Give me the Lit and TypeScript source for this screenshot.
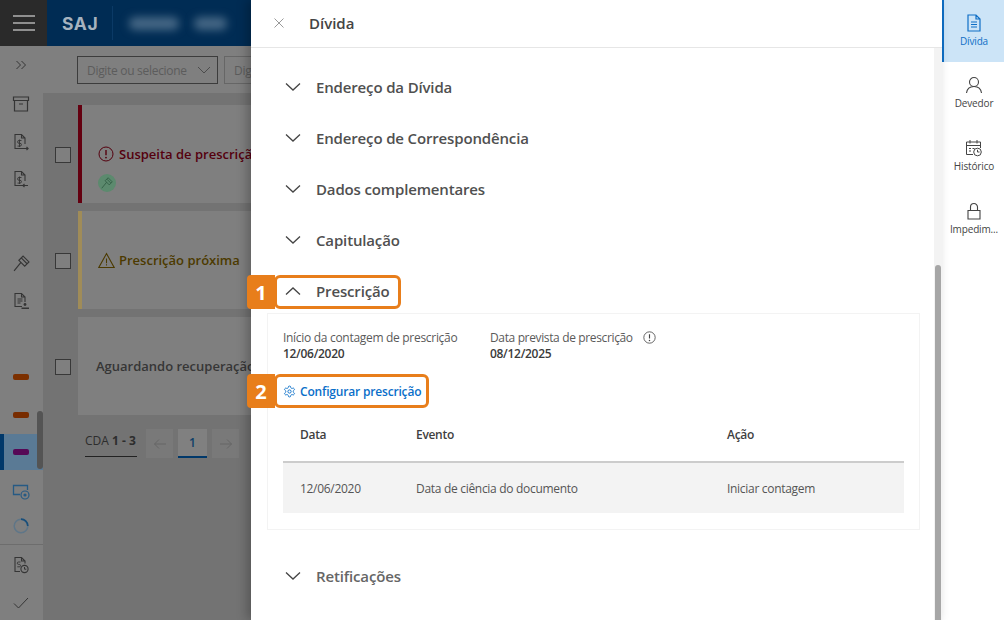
import { LitElement, html, css, svg } from "lit";
import { customElement } from "lit/decorators.js";

const ic = (size: number, box: number, body: unknown, cls = "") =>
  html`<svg class=${cls} width=${size} height=${size} viewBox="0 0 ${box} ${box}" fill="none" stroke="currentColor" stroke-width="1">${body}</svg>`;

const chevDown = ic(16, 16, svg`<path d="M1 4.5 8 11l7-6.5" stroke-width="1.3"/>`);
const chevUp = ic(16, 16, svg`<path d="M1 11.5 8 5l7 6.5" stroke-width="1.3"/>`);
const gear = ic(13, 24, svg`<path stroke-width="1.7" d="M12.22 2h-.44a2 2 0 0 0-2 2v.18a2 2 0 0 1-1 1.73l-.43.25a2 2 0 0 1-2 0l-.15-.08a2 2 0 0 0-2.73.73l-.22.38a2 2 0 0 0 .73 2.73l.15.1a2 2 0 0 1 1 1.72v.51a2 2 0 0 1-1 1.74l-.15.09a2 2 0 0 0-.73 2.73l.22.38a2 2 0 0 0 2.73.73l.15-.08a2 2 0 0 1 2 0l.43.25a2 2 0 0 1 1 1.73V20a2 2 0 0 0 2 2h.44a2 2 0 0 0 2-2v-.18a2 2 0 0 1 1-1.73l.43-.25a2 2 0 0 1 2 0l.15.08a2 2 0 0 0 2.73-.73l.22-.39a2 2 0 0 0-.73-2.73l-.15-.08a2 2 0 0 1-1-1.74v-.5a2 2 0 0 1 1-1.74l.15-.09a2 2 0 0 0 .73-2.73l-.22-.38a2 2 0 0 0-2.73-.73l-.15.08a2 2 0 0 1-2 0l-.43-.25a2 2 0 0 1-1-1.73V4a2 2 0 0 0-2-2z"/><circle cx="12" cy="12" r="3" stroke-width="1.7"/>`);
const alertCircle = (s: number) => ic(s, 16, svg`<circle cx="8" cy="8" r="7"/><path d="M8 4v5.2" stroke-width="1.4"/><circle cx="8" cy="11.6" r=".9" fill="currentColor" stroke="none"/>`);
const warning = ic(17, 16, svg`<path d="M8 1.5 15.2 14.5H.8z"/><path d="M8 6v4.5M8 11.5v1.3"/>`);
const gavel = (s: number) => ic(s, 16, svg`<path d="M9.500 1 15 6.500l-4 4L5.500 5zM7.500 7 1 15M8 3l5 5" stroke-width="1.100"/>`);
const docDollar = (arrow: string) => ic(18, 18, svg`<path d="M11 15.5H3V1.5h6.5L13 5v6M9.5 1.5V5H13" stroke-width="1.1"/><path d="M9.5 7.5H7a1.3 1.3 0 0 0 0 2.8h1a1.3 1.3 0 0 1 0 2.8H5.5M7.5 6.5v7.5" stroke-width=".9"/><path d=${arrow} stroke-width="1.1"/>`);

const railIcons = {
  expand: ic(14, 14, svg`<path d="M2.5 3 6.5 7l-4 4M7.5 3l4 4-4 4"/>`),
  archive: ic(18, 18, svg`<path d="M1.5 2h15v3.5h-15zM2.5 5.5V16h13V5.5M7 9h4" stroke-width="1.2"/>`),
  docOut: docDollar("M11 15.5h5M14.5 14l1.6 1.5-1.6 1.5"),
  docIn: docDollar("M16 15.5h-5M12.5 14l-1.6 1.5 1.6 1.5"),
  gavel: gavel(17),
  docPerson: ic(18, 18, svg`<path d="M10 14.5H3v-13h6.5L13 5v5M9.5 1.5V5H13M5.5 7h5M5.5 9h5M5.5 11h3" stroke-width="1.1"/><path d="M9.5 15.5h7.5v1.5H9.5z" fill="currentColor" stroke="none"/><circle cx="13" cy="12.5" r="1.4" fill="currentColor" stroke="none"/>`),
  screen: ic(18, 18, svg`<path d="M8 12.5H1.5v-9h14V8" stroke="#265a84" stroke-width="1.3"/><circle cx="13" cy="13" r="4" stroke="#265a84" stroke-width="1.2"/><circle cx="13" cy="13" r="1.6" fill="#265a84" stroke="none"/>`),
  spinner: ic(16, 16, svg`<circle cx="8" cy="8" r="6.8" stroke="#5f7688" stroke-width="1.5"/><path d="M8 1.2A6.8 6.8 0 0 1 14.8 8" stroke="#184e7a" stroke-width="1.7"/>`),
  docClock: ic(18, 18, svg`<path d="M8 15.5H3V1.5h6.5L13 5v2.5M9.5 1.5V5H13" stroke-width="1.1"/><path d="M8.5 6H6.5a1.1 1.1 0 0 0 0 2.4h.8a1.1 1.1 0 0 1 0 2.4H5.3" stroke-width=".9"/><circle cx="12.5" cy="13" r="3.6" stroke-width="1.1"/><path d="M12.5 11v2.2h1.8"/>`),
  check: ic(16, 16, svg`<path d="M1 8.5 5.5 13 15 3"/>`),
};

@customElement("app-root")
export class AppRoot extends LitElement {
  static styles = css`
    :host { display: block; width: 1004px; height: 620px; overflow: hidden; font-family: "Open Sans", "Noto Sans", sans-serif; position: relative; }
    * { box-sizing: border-box; }
    .page { display: grid; grid-template-columns: 251px 691px 62px; height: 620px; }

    .back { display: grid; grid-template-rows: 46px 1fr; background: #737373; overflow: hidden; min-width: 0; }
    .topbar { display: flex; background: #002c54; align-items: center; }
    .burger { width: 47px; height: 46px; background: #2a2a2a; display: flex; flex-direction: column; gap: 5px; align-items: center; justify-content: center; }
    .burger i { display: block; width: 22px; height: 2px; background: #8f8f8f; }
    .saj { color: #a6b3bf; font-weight: 700; font-size: 17.5px; margin-left: 15px; letter-spacing: .6px; font-family: "Inter", sans-serif; }
    .vline { width: 1px; height: 34px; background: #0b3a66; margin-left: 14px; }
    .blur { height: 13px; background: #456785; border-radius: 6px; filter: blur(4px); }
    .blur.a { width: 50px; margin-left: 16px; }
    .blur.b { width: 33px; margin-left: 15px; }

    .under { display: grid; grid-template-columns: 43px 1fr; min-height: 0; }
    .rail { background: #7f7f7f; color: #353535; display: flex; flex-direction: column; position: relative; }
    .ri { height: 37.5px; display: flex; align-items: center; justify-content: center; flex: none; padding-right: 1px; }
    .m2 { margin-top: 2px; } .m46 { margin-top: 46.5px; } .m39 { margin-top: 39px; } .m1 { margin-top: 1px; }
    .ri.active { background: #5a7a95; border-left: 4px solid #00386a; height: 36px; margin-top: .5px; margin-bottom: 1px; padding-right: 5px; }
    .ri.short { height: 32px; }
    .rdiv { height: 1px; background: #6d6d6d; margin: 2px 0; flex: none; }
    .bar { width: 16px; height: 6px; border-radius: 2px; }
    .rthumb { position: absolute; left: 37px; top: 365px; width: 6px; height: 58px; background: #545454; border-radius: 3px; }

    .main { display: flex; flex-direction: column; min-width: 0; }
    .filters { height: 47px; background: #7f7f7f; display: flex; gap: 6px; padding: 10px 0 0 34px; overflow: hidden; flex: none; }
    .sel { height: 28px; border: 1px solid #3c3c3c; color: #5c5c5c; font-size: 12px; padding: 0 6px 0 9px; display: flex; align-items: center; justify-content: space-between; flex: none; white-space: nowrap; letter-spacing: -.3px; }
    .sel.one { width: 141px; }
    .sel.two { width: 60px; border-color: #666; justify-content: flex-start; }
    .sel svg { color: #4c4c4c; }
    .rows { display: flex; flex-direction: column; gap: 8px; padding: 12px 0 0 12px; }
    .row { display: flex; align-items: center; gap: 7px; height: 98px; }
    .cb { width: 16px; height: 16px; border: 1px solid #383838; background: #7f7f7f; flex: none; margin-top: 2px; }
    .card { width: 260px; height: 98px; background: #7f7f7f; flex: none; display: flex; flex-direction: column; justify-content: center; padding-left: 16px; font-size: 13px; font-weight: 600; white-space: nowrap; border-left: 4px solid transparent; position: relative; }
    .card.red { border-left-color: #640010; color: #55000e; }
    .card.yellow { border-left-color: #a08c58; color: #4c3a00; }
    .card.plain { color: #363636; padding-left: 18px; border-left: 0; }
    .cline { display: flex; align-items: center; gap: 5px; }
    .card.yellow .cline { gap: 4px; }
    .badge { position: absolute; left: 16px; top: 69px; width: 18px; height: 18px; border-radius: 50%; background: #5c8a6e; color: #2f5a41; display: flex; align-items: center; justify-content: center; }
    .pager { display: flex; align-items: flex-start; margin: 15px 0 0 42px; }
    .cda { width: 52px; height: 27px; border-bottom: 1px solid #222; font-size: 12px; color: #2d2d2d; white-space: nowrap; padding-top: 2px; }
    .cda b { font-weight: 700; }
    .pg { height: 29px; width: 27px; display: flex; align-items: center; justify-content: center; background: #797979; color: #666; flex: none; margin-top: -1px; }
    .pg.prev { margin-left: 9px; }
    .pg.cur { width: 29px; margin: -1px 5px 0 5px; background: #808080; color: #0e3e68; font-size: 12px; font-weight: 600; border-bottom: 2px solid #00386a; }

    .drawer { background: #fff; position: relative; box-shadow: -4px 0 10px rgba(0,0,0,.25); display: flex; flex-direction: column; min-width: 0; }
    .dh { height: 48px; border-bottom: 1px solid #e6e6e6; display: flex; align-items: center; flex: none; padding: 0 0 2px 23px; color: #444; font-size: 15px; font-weight: 600; }
    .close { color: #9a9a9a; width: 35px; display: flex; }
    .dbody { flex: 1; display: flex; min-height: 0; }
    .content { flex: 1; padding: 13px 0 0 16px; min-width: 0; }
    .track { width: 8px; background: #f3f3f3; display: flex; flex-direction: column; justify-content: flex-end; padding-left: 1px; }
    .thumb { width: 6px; height: 355px; background: #a6a6a6; border-radius: 3px 3px 0 0; }
    .ah { height: 51px; display: flex; align-items: center; padding-left: 18px; gap: 15px; font-size: 15px; font-weight: 600; color: #505050; letter-spacing: -.15px; }
    .ah svg { color: #444; }
    .ah.open { height: 48px; padding-top: 4px; }
    .panel { width: 653px; height: 217px; border: 1px solid #f3f3f3; padding: 16px 15px 0; margin-bottom: 20px; }
    .fields { display: flex; }
    .field { font-size: 12px; line-height: 15px; color: #5a5a5a; letter-spacing: -.3px; }
    .field.f1 { width: 207px; }
    .field.f2 { letter-spacing: -.36px; }
    .field b { display: block; font-weight: 600; color: #3a3a3a; letter-spacing: -.3px; margin-top: 1px; }
    .fhead { display: flex; align-items: center; gap: 10px; }
    .fhead svg { color: #444; }
    .cfg { display: flex; align-items: center; gap: 4px; color: #0a6fc9; font-size: 12px; font-weight: 600; height: 20px; margin-top: 20px; letter-spacing: -.18px; }
    .table { margin-top: 6px; width: 621px; font-size: 12px; letter-spacing: -.3px; }
    .tr { display: grid; grid-template-columns: 116px 311px 1fr; padding-left: 17px; align-items: center; }
    .tr.head { height: 56px; border-bottom: 2px solid #ccc; color: #3f3f3f; font-weight: 600; padding-top: 1px; }
    .tr.body { height: 50px; background: #f3f3f3; color: #555; }
    .muted { color: #666; }

    .ann { position: absolute; display: flex; height: 34px; }
    .ann .num { width: 28px; background: #e87e1b; color: #fff; font-weight: 700; font-size: 20px; display: flex; align-items: center; justify-content: center; border-radius: 4px 0 0 4px; }
    .ann .box { border: 3px solid #e87e1b; border-radius: 6px; margin-left: -1px; }
    .ann.a1 { left: -4px; top: 275px; }
    .ann.a1 .box { width: 127px; }
    .ann.a2 { left: -4px; top: 374px; }
    .ann.a2 .box { width: 155px; }

    .tabs { background: #fff; display: flex; flex-direction: column; }
    .tab { height: 63px; display: flex; flex-direction: column; align-items: center; justify-content: flex-start; padding-top: 14px; font-size: 10px; color: #444; gap: 3px; border-left: 2px solid transparent; letter-spacing: -.15px; white-space: nowrap; flex: none; }
    .tab.on { background: #cce4f7; border-left-color: #0f6fc6; color: #0f6fc6; height: 62px; padding-top: 14px; }
    .tab svg { display: block; }
    .tab .t { line-height: 12px; }
  `;

  private head(title: string, cls = "") {
    return html`<div class="ah ${cls}">${chevDown}<span>${title}</span></div>`;
  }

  render() {
    const r = railIcons;
    return html`<div class="page">
      <section class="back">
        <div class="topbar">
          <div class="burger"><i></i><i></i><i></i></div>
          <span class="saj">SAJ</span><div class="vline"></div>
          <div class="blur a"></div><div class="blur b"></div>
        </div>
        <div class="under">
          <nav class="rail">
            <div class="ri">${r.expand}</div>
            <div class="ri m2">${r.archive}</div>
            <div class="ri">${r.docOut}</div>
            <div class="ri">${r.docIn}</div>
            <div class="ri m46">${r.gavel}</div>
            <div class="ri">${r.docPerson}</div>
            <div class="ri m39"><div class="bar" style="background:#7c3000"></div></div>
            <div class="ri"><div class="bar" style="background:#782c00"></div></div>
            <div class="ri active"><div class="bar" style="background:#560856"></div></div>
            <div class="ri m1">${r.screen}</div>
            <div class="ri short">${r.spinner}</div>
            <div class="rdiv"></div>
            <div class="ri">${r.docClock}</div>
            <div class="ri">${r.check}</div>
            <div class="rthumb"></div>
          </nav>
          <div class="main">
            <div class="filters">
              <div class="sel one">Digite ou selecione ${ic(14, 14, svg`<path d="M1 4l6 6 6-6"/>`)}</div>
              <div class="sel two">Digite</div>
            </div>
            <div class="rows">
              <div class="row"><div class="cb"></div><div class="card red"><div class="cline">${alertCircle(16)}<span>Suspeita de prescrição</span></div><div class="badge">${gavel(12)}</div></div></div>
              <div class="row"><div class="cb"></div><div class="card yellow"><div class="cline">${warning}<span>Prescrição próxima</span></div></div></div>
              <div class="row"><div class="cb"></div><div class="card plain">Aguardando recuperação</div></div>
            </div>
            <div class="pager">
              <div class="cda">CDA <b>1 - 3</b></div>
              <div class="pg prev">${ic(14, 14, svg`<path d="M13 7H1.5M6 2.5 1.5 7 6 11.5"/>`)}</div>
              <div class="pg cur">1</div>
              <div class="pg">${ic(14, 14, svg`<path d="M1 7h11.5M8 2.5 12.5 7 8 11.5"/>`)}</div>
            </div>
          </div>
        </div>
      </section>

      <section class="drawer">
        <header class="dh"><span class="close">${ic(10, 10, svg`<path d="M.5.5l9 9M9.5.5l-9 9"/>`)}</span>Dívida</header>
        <div class="dbody">
          <div class="content">
            ${this.head("Endereço da Dívida")}
            ${this.head("Endereço de Correspondência")}
            ${this.head("Dados complementares")}
            ${this.head("Capitulação")}
            <div class="ah open">${chevUp}<span>Prescrição</span></div>
            <div class="panel">
              <div class="fields">
                <div class="field f1">Início da contagem de prescrição<b>12/06/2020</b></div>
                <div class="field f2"><div class="fhead">Data prevista de prescrição ${alertCircle(13)}</div><b>08/12/2025</b></div>
              </div>
              <div class="cfg">${gear}<span>Configurar prescrição</span></div>
              <div class="table">
                <div class="tr head"><span>Data</span><span>Evento</span><span>Ação</span></div>
                <div class="tr body"><span>12/06/2020</span><span>Data de ciência do documento</span><span>Iniciar contagem</span></div>
              </div>
            </div>
            <div class="ah muted">${chevDown}<span>Retificações</span></div>
          </div>
          <div class="track"><div class="thumb"></div></div>
        </div>
        <div class="ann a1"><div class="num">1</div><div class="box"></div></div>
        <div class="ann a2"><div class="num">2</div><div class="box"></div></div>
      </section>

      <aside class="tabs">
        <div class="tab on">${ic(18, 18, svg`<path d="M3 1h8l4 4v12H3zM11 1v4h4M6 8h6M6 10.5h6M6 13h6" stroke-width="1.2"/>`)}<span class="t">Dívida</span></div>
        <div class="tab">${ic(18, 18, svg`<circle cx="9" cy="6" r="4.5" stroke-width="1.1"/><path d="M1.5 17c.5-4 3.5-6.5 7.5-6.5s7 2.500 7.500 6.500" stroke-width="1.1"/>`)}<span class="t">Devedor</span></div>
        <div class="tab">${ic(18, 18, svg`<path d="M8 15.500H1.500V3h14v6M1.500 6.500h14M5 1v3.500M12 1v3.500M4 9.500h2M7.500 9.500h2M4 12h2" stroke-width="1"/><circle cx="12.500" cy="13" r="3.800"/><path d="M12.500 10.800V13h2"/>`)}<span class="t">Histórico</span></div>
        <div class="tab">${ic(18, 18, svg`<path d="M3 8.500h12V17H3zM5.500 8.500V5a3.500 3.500 0 0 1 7 0v3.500" stroke-width="1.1"/>`)}<span class="t">Impedim...</span></div>
      </aside>
    </div>`;
  }
}
